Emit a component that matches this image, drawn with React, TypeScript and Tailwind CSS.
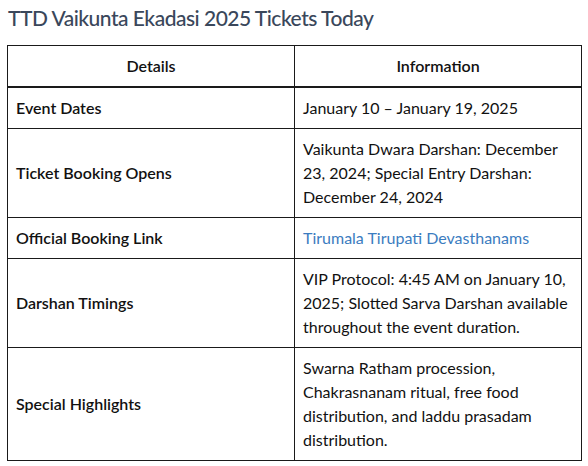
const rows: { label: string; info: React.ReactNode }[] = [
  { label: "Event Dates", info: "January 10 – January 19, 2025" },
  {
    label: "Ticket Booking Opens",
    info: "Vaikunta Dwara Darshan: December 23, 2024; Special Entry Darshan: December 24, 2024",
  },
  {
    label: "Official Booking Link",
    info: <a className="text-[#3b7cc0]">Tirumala Tirupati Devasthanams</a>,
  },
  {
    label: "Darshan Timings",
    info: "VIP Protocol: 4:45 AM on January 10, 2025; Slotted Sarva Darshan available throughout the event duration.",
  },
  {
    label: "Special Highlights",
    info: "Swarna Ratham procession, Chakrasnanam ritual, free food distribution, and laddu prasadam distribution.",
  },
];

export default function App() {
  return (
    <div className="w-[588px] h-[466px] bg-white px-[7px] pt-[4px] font-['Lato',sans-serif]">
      <h2 className="text-[21px] leading-[28px] font-medium tracking-[-0.5px] text-[#3a475b] pl-[1px]">
        TTD Vaikunta Ekadasi 2025 Tickets Today
      </h2>
      <table className="mt-[13px] w-[575px] border-collapse table-fixed text-[16px] leading-[24px] text-[#111]">
        <thead>
          <tr>
            <th className="w-1/2 border border-b-2 border-[#1a1a1a] px-2 py-2 font-semibold text-center">Details</th>
            <th className="w-1/2 border border-b-2 border-[#1a1a1a] px-2 py-2 font-semibold text-center">Information</th>
          </tr>
        </thead>
        <tbody>
          {rows.map((r) => (
            <tr key={r.label}>
              <td className="border border-[#1a1a1a] px-2 py-2 font-semibold align-middle">{r.label}</td>
              <td className="border border-[#1a1a1a] px-2 py-2 align-middle">{r.info}</td>
            </tr>
          ))}
        </tbody>
      </table>
    </div>
  );
}
